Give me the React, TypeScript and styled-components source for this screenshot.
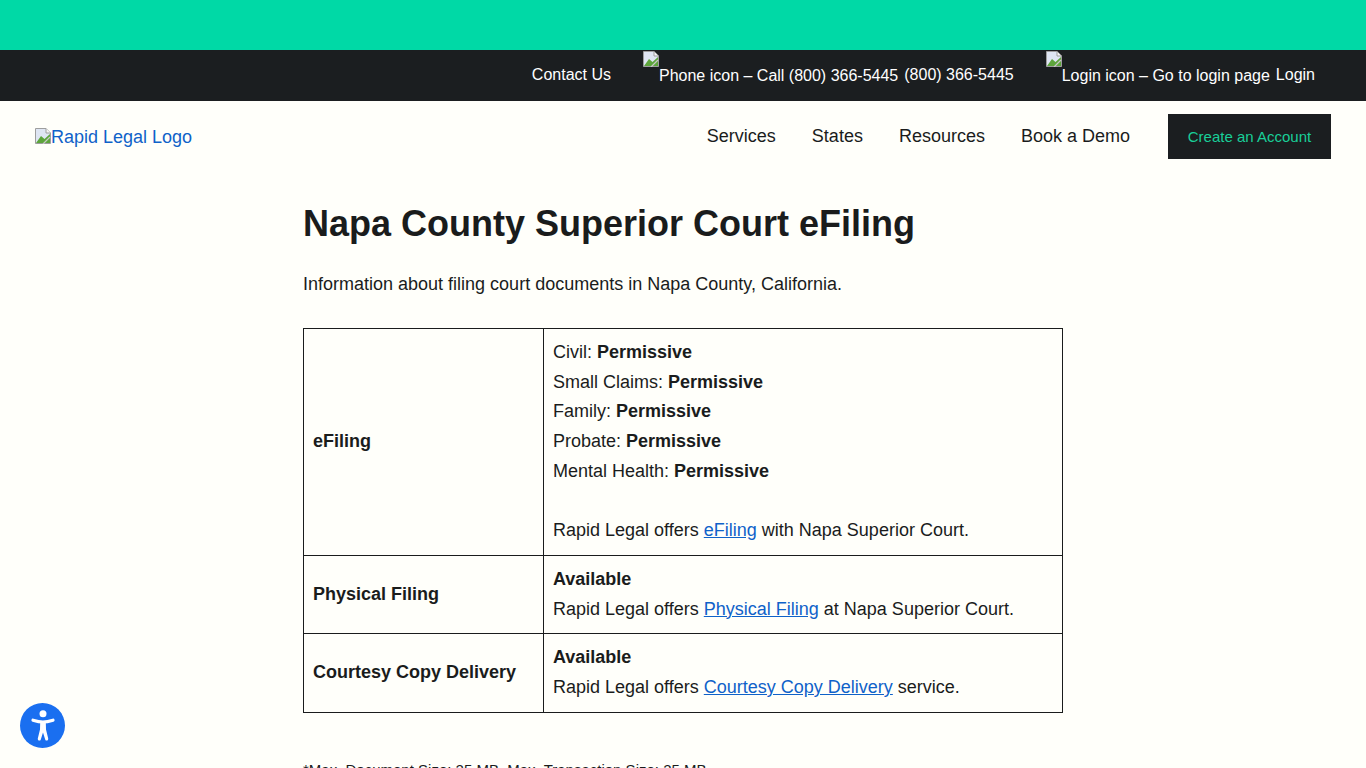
import React from "react";
import styled, { createGlobalStyle } from "styled-components";

const Global = createGlobalStyle`
  html, body { margin: 0; padding: 0; background: #fffffa; }
  body { font-family: "Liberation Sans", Arial, sans-serif; color: #1a1c1c; font-size: 18px; }
  * { box-sizing: border-box; }
`;

const TopStrip = styled.div`
  height: 50px;
  background: #00d9a6;
`;

const UtilityBar = styled.div`
  height: 51px;
  background: #1b1e20;
  display: flex;
  justify-content: flex-end;
  align-items: flex-start;
  padding-right: 51px;
  color: #fff;
  font-size: 16px;
`;

const UtilityLink = styled.a<{ $gap: number }>`
  display: flex;
  align-items: flex-start;
  color: #fff;
  margin-left: ${(p) => p.$gap}px;
  line-height: 18px;
  padding-top: 16px;
`;

const BrokenImage = styled.span`
  display: inline-flex;
  align-items: flex-start;
  margin-top: -15px;
  margin-right: 6px;
`;

const AltText = styled.span`
  padding-top: 16px;
`;

const Nav = styled.header`
  height: 71px;
  display: flex;
  align-items: flex-start;
  justify-content: space-between;
  padding: 13px 35px 0 35px;
`;

const Logo = styled.a`
  display: flex;
  align-items: flex-start;
  color: #0f62c9;
  font-size: 18px;
  line-height: 21px;
  margin-top: 14px;
  text-decoration: none;
`;

const LogoLabel = styled.span`
  margin-top: -1px;
`;

const NavGroup = styled.nav`
  display: flex;
  align-items: flex-start;
`;

const NavItem = styled.a`
  font-size: 18px;
  line-height: 21px;
  color: #1a1c1c;
  margin-right: 36px;
  margin-top: 12px;
`;

const Cta = styled.a`
  width: 163px;
  height: 45px;
  margin-left: 2px;
  background: #1b1e20;
  color: #19cf98;
  font-size: 15px;
  display: flex;
  align-items: center;
  justify-content: center;
`;

const Main = styled.main`
  width: 760px;
  margin-left: 303px;
  padding-bottom: 40px;
`;

const Title = styled.h1`
  margin: 30px 0 0;
  font-size: 36px;
  line-height: 43px;
  font-weight: 700;
`;

const Intro = styled.p`
  margin: 26px 0 30px;
  line-height: 27px;
`;

const Table = styled.table`
  width: 760px;
  border-collapse: collapse;
  line-height: 29.7px;
`;

const LabelCell = styled.td`
  width: 240px;
  border: 1px solid #1a1c1c;
  padding: 9px;
  font-weight: 700;
`;

const ValueCell = styled.td`
  border: 1px solid #1a1c1c;
  padding: 9px;
`;

const Line = styled.div`
  min-height: 29.7px;
`;

const Link = styled.a`
  color: #0f62c9;
  text-decoration: underline;
`;

const Note = styled.p`
  margin: 47px 0 0;
  font-size: 15px;
  line-height: 20px;
`;

const A11yButton = styled.button`
  position: fixed;
  left: 20px;
  top: 703px;
  width: 45px;
  height: 45px;
  border: none;
  padding: 0;
  border-radius: 50%;
  background: #1a6ff0;
  display: flex;
  align-items: center;
  justify-content: center;
`;

const BrokenSlot = styled.span`
  display: block;
  height: 16px;
  width: 16px;
  flex: none;
`;

const Broken = () => (
  <BrokenSlot>
    <svg width="16" height="16" viewBox="0 0 16 16">
      <path d="M0.5 0.5H11L15.5 5V15.5H0.5Z" fill="#dfe6f3" stroke="#9e9e9e" />
      <path d="M1 15L6 8L9.5 11L15 6V15Z" fill="#5da53c" />
      <path d="M11 0.5V5H15.5" fill="#f6f6f6" stroke="#9e9e9e" />
      <path d="M15 9L8 16" stroke="#c8c8c8" strokeWidth="1.2" />
    </svg>
  </BrokenSlot>
);

export default function App() {
  return (
    <>
      <Global />
      <TopStrip />
      <UtilityBar>
        <UtilityLink $gap={0}>Contact Us</UtilityLink>
        <UtilityLink $gap={32}>
          <BrokenImage>
            <Broken />
            <AltText>Phone icon – Call (800) 366-5445</AltText>
          </BrokenImage>
          (800) 366-5445
        </UtilityLink>
        <UtilityLink $gap={32}>
          <BrokenImage>
            <Broken />
            <AltText>Login icon – Go to login page</AltText>
          </BrokenImage>
          Login
        </UtilityLink>
      </UtilityBar>
      <Nav>
        <Logo>
          <Broken />
          <LogoLabel>Rapid Legal Logo</LogoLabel>
        </Logo>
        <NavGroup>
          <NavItem>Services</NavItem>
          <NavItem>States</NavItem>
          <NavItem>Resources</NavItem>
          <NavItem>Book a Demo</NavItem>
          <Cta>Create an Account</Cta>
        </NavGroup>
      </Nav>
      <Main>
        <Title>Napa County Superior Court eFiling</Title>
        <Intro>Information about filing court documents in Napa County, California.</Intro>
        <Table>
          <tbody>
            <tr>
              <LabelCell>eFiling</LabelCell>
              <ValueCell>
                <Line>Civil: <b>Permissive</b></Line>
                <Line>Small Claims: <b>Permissive</b></Line>
                <Line>Family: <b>Permissive</b></Line>
                <Line>Probate: <b>Permissive</b></Line>
                <Line>Mental Health: <b>Permissive</b></Line>
                <Line />
                <Line>Rapid Legal offers <Link>eFiling</Link> with Napa Superior Court.</Line>
              </ValueCell>
            </tr>
            <tr>
              <LabelCell>Physical Filing</LabelCell>
              <ValueCell>
                <Line><b>Available</b></Line>
                <Line>Rapid Legal offers <Link>Physical Filing</Link> at Napa Superior Court.</Line>
              </ValueCell>
            </tr>
            <tr>
              <LabelCell>Courtesy Copy Delivery</LabelCell>
              <ValueCell>
                <Line><b>Available</b></Line>
                <Line>Rapid Legal offers <Link>Courtesy Copy Delivery</Link> service.</Line>
              </ValueCell>
            </tr>
          </tbody>
        </Table>
        <Note>*Max. Document Size: 25 MB, Max. Transaction Size: 25 MB</Note>
      </Main>
      <A11yButton aria-label="Accessibility">
        <svg width="34" height="34" viewBox="0 0 34 34" fill="none">
          <circle cx="17" cy="4.7" r="3.5" fill="#fff" />
          <path d="M7 11.2C11 12.4 14 13 17 13C20 13 23 12.4 27 11.2" stroke="#fff" strokeWidth="3.2" strokeLinecap="round" />
          <path d="M14.2 13.2H19.8L20 20.5L22.2 29.6C22.6 31.8 19.8 32.4 19.2 30.4L17 23.5L14.8 30.4C14.2 32.4 11.4 31.8 11.8 29.6L14 20.5Z" fill="#fff" />
        </svg>
      </A11yButton>
    </>
  );
}
